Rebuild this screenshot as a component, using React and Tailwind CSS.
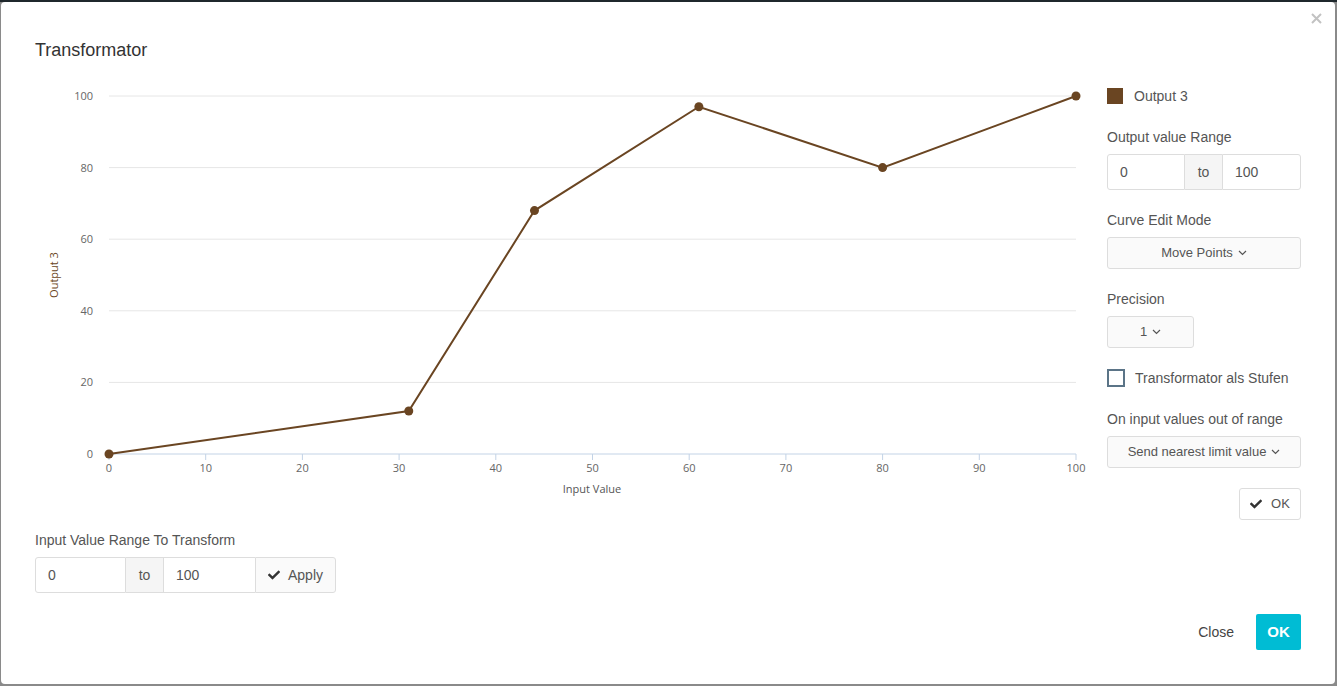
import { FaCheck } from "react-icons/fa";

const BROWN = "#6a4522";

// chart geometry (svg-local coordinates)
const X0 = 74;
const X1 = 1041;
const Y0 = 374;
const Y1 = 16;
const sx = (v) => X0 + ((X1 - X0) * v) / 100;
const sy = (v) => Y0 - ((Y0 - Y1) * v) / 100;

const points = [
  [0, 0],
  [31, 12],
  [44, 68],
  [61, 97],
  [80, 80],
  [100, 100],
];

function Caret() {
  return (
    <svg width="9" height="6" viewBox="0 0 9 6" className="inline-block ml-[5px] mb-[2px]">
      <polyline points="1,1 4.5,4.5 8,1" fill="none" stroke="#555" strokeWidth="1.2" />
    </svg>
  );
}

function CurveChart() {
  const path = points.map(([x, y], i) => `${i ? "L" : "M"}${sx(x)},${sy(y)}`).join(" ");
  return (
    <svg width="1060" height="420" className="block" style={{ fontFamily: "'Open Sans', sans-serif" }}>
      {[0, 20, 40, 60, 80, 100].map((v) => (
        <g key={v}>
          {v > 0 && <line x1={X0} x2={X1} y1={sy(v)} y2={sy(v)} stroke="#e6e6e6" strokeWidth="1" />}
          <text x="58" y={sy(v) + 4} textAnchor="end" fontSize="11" fill="#666">
            {v}
          </text>
        </g>
      ))}
      <line x1={X0} x2={X1} y1={Y0} y2={Y0} stroke="#c3d3e6" strokeWidth="1" />
      {[0, 10, 20, 30, 40, 50, 60, 70, 80, 90, 100].map((v) => (
        <g key={v}>
          <line x1={sx(v)} x2={sx(v)} y1={Y0} y2={Y0 + 6} stroke="#c3d3e6" strokeWidth="1" />
          <text x={sx(v)} y={Y0 + 18} textAnchor="middle" fontSize="11" fill="#666">
            {v}
          </text>
        </g>
      ))}
      <text x="557" y="413" textAnchor="middle" fontSize="11" fill="#555">
        Input Value
      </text>
      <text
        x="23"
        y="195"
        textAnchor="middle"
        fontSize="11"
        fill={BROWN}
        transform="rotate(-90 23 195)"
      >
        Output 3
      </text>
      <path d={path} fill="none" stroke={BROWN} strokeWidth="2" />
      {points.map(([x, y]) => (
        <circle key={x} cx={sx(x)} cy={sy(y)} r="4.5" fill={BROWN} />
      ))}
    </svg>
  );
}

function RangeGroup({ from, to, wide }) {
  return (
    <div className="flex h-[36px] text-[14px] text-[#555]">
      <div className={`${wide ? "w-[91px]" : "w-[78px]"} flex items-center pl-[12px] border border-[#ddd] rounded-l-[3px] bg-white`}>
        {from}
      </div>
      <div className="w-[37px] flex items-center justify-center border-y border-[#ddd] bg-[#f5f5f5]">to</div>
      <div className={`${wide ? "w-[92px] border-r-0" : "w-[79px] rounded-r-[3px]"} flex items-center pl-[12px] border border-[#ddd] bg-white`}>
        {to}
      </div>
    </div>
  );
}

export default function App() {
  return (
    <div className="h-[686px] bg-[#8a8a8a] border-t-2 border-[#1f282c] pl-[1px] pr-[2px] pb-[2px] overflow-hidden" style={{ fontFamily: "'Liberation Sans', Arial, sans-serif" }}>
      <div className="relative h-full bg-white rounded-[4px] px-[34px] pt-[38px]">
        <button className="absolute top-[11px] right-[13px]">
          <svg width="11" height="11" viewBox="0 0 11 11">
            <path d="M1 1L10 10M10 1L1 10" stroke="#c2c2c2" strokeWidth="2" />
          </svg>
        </button>
        <h1 className="text-[18px] leading-[20px] text-[#333]">Transformator</h1>

        <div className="mt-[20px] flex gap-[12px]">
          {/* curve editor */}
          <div className="w-[1060px]">
            <CurveChart />
            <div className="mt-[30px] text-[14px] leading-[20px] text-[#555]">Input Value Range To Transform</div>
            <div className="mt-[7px] flex">
              <RangeGroup from="0" to="100" wide />
              <button className="h-[36px] w-[81px] flex items-center justify-center gap-[8px] border border-[#ddd] rounded-r-[3px] bg-[#fafafa] text-[14px] text-[#555]">
                <FaCheck className="text-[12px] text-[#333]" />
                Apply
              </button>
            </div>
          </div>

          {/* settings */}
          <div className="w-[194px] text-[14px] text-[#555]">
            <div className="mt-[8px] flex items-center h-[16px]">
              <span className="w-[16px] h-[16px] bg-[#6a4522]" />
              <span className="ml-[11px]">Output 3</span>
            </div>

            <div className="mt-[23px] leading-[20px]">Output value Range</div>
            <div className="mt-[7px]">
              <RangeGroup from="0" to="100" />
            </div>

            <div className="mt-[20px] leading-[20px]">Curve Edit Mode</div>
            <button className="mt-[7px] w-full h-[32px] border border-[#ddd] rounded-[3px] bg-[#fafafa] text-[13px] text-[#555]">
              Move Points
              <Caret />
            </button>

            <div className="mt-[20px] leading-[20px]">Precision</div>
            <button className="mt-[7px] w-[87px] h-[32px] border border-[#ddd] rounded-[3px] bg-[#fafafa] text-[13px] text-[#555]">
              1
              <Caret />
            </button>

            <label className="mt-[21px] flex items-center h-[18px]">
              <span className="w-[18px] h-[18px] border-2 border-[#5b7487] bg-white" />
              <span className="ml-[10px]">Transformator als Stufen</span>
            </label>

            <div className="mt-[22px] leading-[20px]">On input values out of range</div>
            <button className="mt-[7px] w-full h-[32px] border border-[#ddd] rounded-[3px] bg-[#fafafa] text-[13px] text-[#555]">
              Send nearest limit value
              <Caret />
            </button>

            <div className="mt-[20px] flex justify-end">
              <button className="w-[62px] h-[32px] flex items-center justify-center gap-[9px] border border-[#ddd] rounded-[3px] bg-white text-[13px] text-[#555]">
                <FaCheck className="text-[12px] text-[#333]" />
                OK
              </button>
            </div>
          </div>
        </div>

        <div className="mt-[21px] flex justify-end items-center">
          <button className="px-[11px] h-[36px] text-[14px] text-[#444]">Close</button>
          <button className="ml-[11px] w-[45px] h-[36px] rounded-[2px] bg-[#00bcd4] text-white font-bold text-[15px]">OK</button>
        </div>
      </div>
    </div>
  );
}
